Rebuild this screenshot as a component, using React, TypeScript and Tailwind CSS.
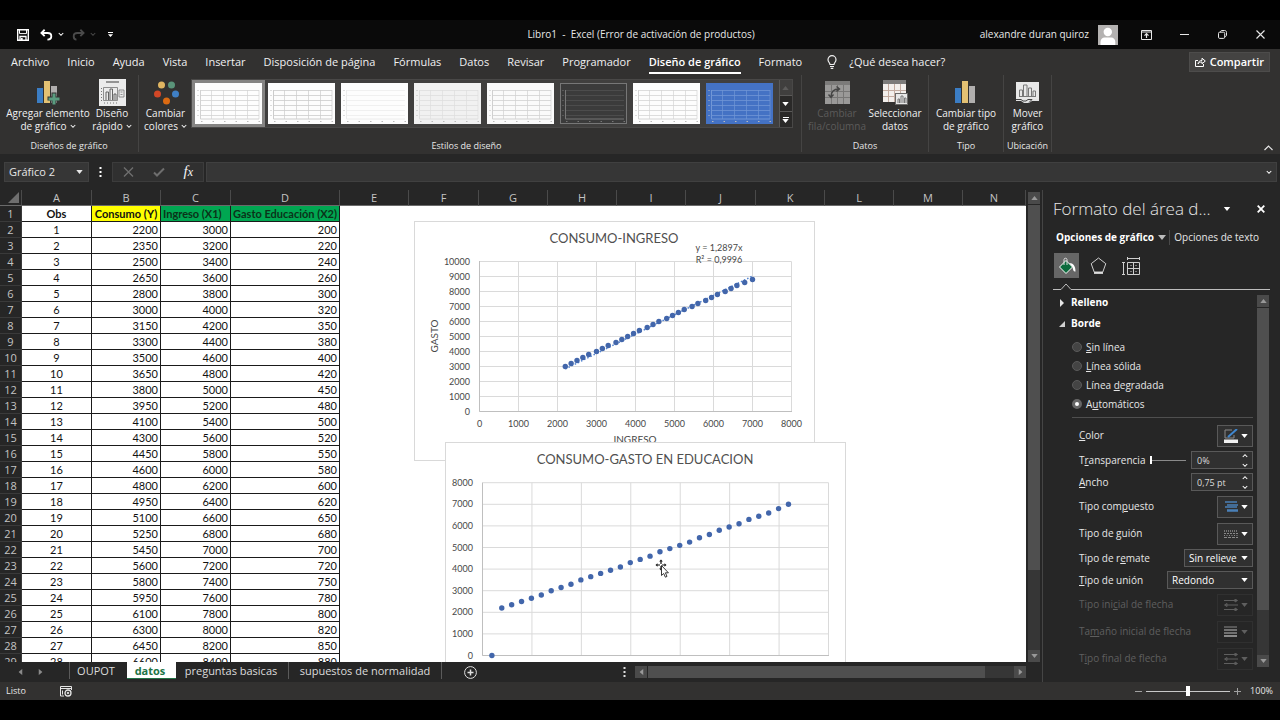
import React from "react";

const consumo = [
  2200, 2350, 2500, 2650, 2800, 3000, 3150, 3300, 3500, 3650, 3800, 3950, 4100, 4300, 4450, 4600, 4800, 4950, 5100,
  5250, 5450, 5600, 5800, 5950, 6100, 6300, 6450, 6600, 6800, 7000,
];
const gasto = [
  200, 220, 240, 260, 300, 320, 350, 380, 400, 420, 450, 480, 500, 520, 550, 580, 600, 620, 650, 680, 700, 720, 750,
  780, 800, 820, 850, 880,
];
const rows = gasto.map((g, i) => [i + 1, consumo[i], 3000 + 200 * i, g]);
const emptyColumns = ["E", "F", "G", "H", "I", "J", "K", "L", "M", "N"];

function Caret({ className = "" }: { className?: string }) {
  return (
    <svg viewBox="0 0 8 5" className={`h-[4px] w-[7px] shrink-0 ${className}`} fill="currentColor" aria-hidden="true">
      <path d="M0 0h8L4 5z" />
    </svg>
  );
}

function Chevron({ className = "" }: { className?: string }) {
  return (
    <svg viewBox="0 0 8 6" className={`h-[5px] w-[6px] shrink-0 ${className}`} fill="none" stroke="currentColor" strokeWidth="1.4" aria-hidden="true">
      <path d="M1 1l3 3 3-3" />
    </svg>
  );
}

/* ---------- Title bar ---------- */

function TitleBar() {
  return (
    <header className="relative flex h-[29px] shrink-0 items-center bg-[#0a0a0a]">
      <div className="flex flex-1 items-center pl-[17px]">
        <button aria-label="Guardar">
          <svg width="12" height="12" viewBox="0 0 12 12" fill="none" stroke="#fff">
            <path d="M.7.7h10.6v10.6H.7z" strokeWidth="1.4" />
            <path d="M2.5 1v3.6h7V1" strokeWidth="1" />
            <path d="M3 11.5V7.5h6v4" strokeWidth="1.3" />
            <path d="M4.8 9v2.5" strokeWidth="1.8" />
          </svg>
        </button>
        <button aria-label="Deshacer" className="ml-[11px] flex items-center gap-[5px] text-white">
          <svg width="13" height="12" viewBox="0 0 14 13" fill="none" stroke="currentColor" strokeWidth="2">
            <path d="M5 .8L1.5 4.3 5 7.8M2 4.3h6.2c2.600 0 4 1.400 4 3.500 0 2.200-1.500 3.700-4.200 3.700" />
          </svg>
          <Chevron />
        </button>
        <button aria-label="Rehacer" className="ml-[8px] flex items-center gap-[5px] text-[#4a4a4a]">
          <svg width="13" height="12" viewBox="0 0 14 13" fill="none" stroke="currentColor" strokeWidth="2">
            <path d="M9 .8l3.500 3.500L9 7.800M12 4.300H5.800c-2.600 0-4 1.400-4 3.500 0 2.200 1 3.700 3 3.700" />
          </svg>
          <Chevron />
        </button>
        <button aria-label="Personalizar barra" className="ml-[12px] text-white">
          <svg width="5" height="5" viewBox="0 0 5 5" fill="currentColor">
            <path d="M0 0h5v1H0zM0 2.300h5L2.500 5z" />
          </svg>
        </button>
      </div>
      <h1 className="whitespace-pre text-[10px] text-[#e8e8e8]">Libro1  -  Excel (Error de activación de productos)</h1>
      <div className="flex flex-1 items-center justify-end pr-[15px] text-[#e8e8e8]">
        <span className="mr-[9px] text-[10px]">alexandre duran quiroz</span>
        <svg width="20" height="20" viewBox="0 0 20 20" className="mr-[23px] bg-[#b4b2b1]">
          <circle cx="9.800" cy="7" r="4.200" fill="#fff" />
          <path d="M2.500 20v-3c0-3 2-4.500 4-4.500h6.800c2 0 4 1.500 4 4.500v3z" fill="#fff" />
        </svg>
        <button aria-label="Opciones de cinta" className="mr-[28px]">
          <svg width="11" height="10" viewBox="0 0 11 10" fill="none" stroke="currentColor">
            <path d="M.5.5h10v9H.5zM.5 2h10" />
            <path d="M5.500 8V4M3.500 5.700l2-2 2 2" strokeWidth="1.200" />
          </svg>
        </button>
        <button aria-label="Minimizar" className="mr-[29px]">
          <svg width="9" height="9" viewBox="0 0 9 9" stroke="currentColor">
            <path d="M0 4.500h9" />
          </svg>
        </button>
        <button aria-label="Restaurar" className="mr-[29px]">
          <svg width="9" height="9" viewBox="0 0 9 9" fill="none" stroke="currentColor">
            <rect x=".5" y="2.200" width="6.200" height="6.200" rx="1.200" />
            <path d="M2.500 2.200C2.500 1 3 .5 4 .5h2.500c1.300 0 2 .7 2 2v2.500c0 1-.5 1.500-1.700 1.500" />
          </svg>
        </button>
        <button aria-label="Cerrar">
          <svg width="9" height="9" viewBox="0 0 9 9" fill="none" stroke="currentColor" strokeWidth="1.100">
            <path d="M.5.5l8 8M8.500.5l-8 8" />
          </svg>
        </button>
      </div>
    </header>
  );
}

/* ---------- Ribbon ---------- */

const ribbonTabs = [
  "Archivo", "Inicio", "Ayuda", "Vista", "Insertar", "Disposición de página", "Fórmulas", "Datos", "Revisar",
  "Programador", "Diseño de gráfico", "Formato",
];

function RibbonTabs() {
  return (
    <nav className="flex h-[26px] shrink-0 items-center bg-[#323130] pl-[11px] pr-[10px] text-[11px] text-[#f0f0f0]">
      <div className="flex items-center gap-[18px]">
        {ribbonTabs.map((t) =>
          t === "Diseño de gráfico" ? (
            <button key={t} className="mt-[3px] border-b-2 border-white pb-px font-semibold leading-[18px] text-white">{t}</button>
          ) : (
            <button key={t} className="leading-[18px]">{t}</button>
          ),
        )}
      </div>
      <button className="ml-[25px] flex items-center gap-[12px]">
        <svg width="10" height="14" viewBox="0 0 10 14" fill="none" stroke="currentColor" strokeWidth="1.200">
          <path d="M3 9.500C3 7.800 1 7 1 4.700a4 4 0 018 0C9 7 7 7.800 7 9.500zM3 11.500h4M3.700 13.300h2.600" />
        </svg>
        ¿Qué desea hacer?
      </button>
      <button className="ml-auto flex h-[20px] items-center gap-[4px] border border-[#4d4c4b] bg-[#444342] px-[5px] font-semibold text-white">
        <svg width="11" height="10" viewBox="0 0 11 10" fill="none" stroke="currentColor">
          <path d="M3 3.500H.5v6h8V7" />
          <path d="M3 7c.3-2.400 1.700-3.500 4-3.500V1.200L10.300 4 7 6.800V5C5 5 4 5.500 3 7z" />
        </svg>
        Compartir
      </button>
    </nav>
  );
}

function Group({ label, className, children }: { label: string; className: string; children: React.ReactNode }) {
  return (
    <section className={`flex h-[77px] flex-col justify-between border-r border-[#454443] ${className}`}>
      <div className="flex items-start justify-center">{children}</div>
      <div className="text-center text-[9px] leading-[12px] text-[#e6e6e6]">{label}</div>
    </section>
  );
}

function BigButton({ icon, lines, drop, disabled, className = "" }: { icon: React.ReactNode; lines: [string, string]; drop?: boolean; disabled?: boolean; className?: string }) {
  return (
    <button disabled={disabled} className={`flex flex-col items-center whitespace-nowrap pt-[3px] text-[10px] leading-[13px] ${disabled ? "text-[#5c5b5a]" : "text-[#f0f0f0]"} ${className}`}>
      <span className="flex h-[29px] items-center">{icon}</span>
      <span>{lines[0]}</span>
      <span className="flex items-center gap-[3px]">
        {lines[1]}
        {drop && <Chevron />}
      </span>
    </button>
  );
}

function BarsIcon({ plus }: { plus?: boolean }) {
  return (
    <svg width="24" height="25" viewBox="0 0 24 25">
      <rect x="1" y="8" width="6" height="15" fill="#3b7dc4" />
      <rect x="8" y="1" width="6" height="22" fill="#e3c173" />
      <rect x="15" y="6" width="6" height="17" fill="#b1afae" />
      {plus && <path d="M15.500 12.500h5v4h4v4h-4v4h-5v-4h-4v-4h4z" fill="#323130" />}
      {plus && <path d="M16.500 13.500h3v4h4v3h-4v4h-3v-4h-4v-3h4z" fill="#5a9c80" />}
    </svg>
  );
}

function LayoutIcon() {
  return (
    <svg width="27" height="27" viewBox="0 0 27 27" fill="none" stroke="#777">
      <rect width="27" height="27" fill="#ebebeb" stroke="none" />
      <path d="M7 3h13" strokeWidth="1.500" />
      <path d="M4.500 8.500h14v13h-14zM20 11h5v7h-5zM21.500 13h2M21.500 15.500h2" strokeWidth=".8" />
      <path d="M7 21v-8h2.500v8M11 21V10h2.500v11M15 21v-6h2v6" stroke="#555" strokeWidth=".9" />
      <path d="M2.500 9v13M5 24h13" strokeDasharray="1 2" />
    </svg>
  );
}

function ColorsIcon() {
  return (
    <svg width="26" height="24" viewBox="0 0 26 24">
      <circle cx="8.500" cy="4" r="3.500" fill="#e0b561" />
      <circle cx="18.500" cy="4" r="3.500" fill="#5a9479" />
      <circle cx="4.500" cy="13" r="3.500" fill="#d24726" />
      <circle cx="22.500" cy="13" r="3.500" fill="#3f7fc4" />
      <circle cx="13.500" cy="20" r="3.500" fill="#db6a12" />
    </svg>
  );
}

function SwapIcon() {
  return (
    <svg width="25" height="23" viewBox="0 0 25 23" fill="none">
      <rect width="25" height="23" fill="#9a9998" />
      <rect width="25" height="4" fill="#7c7b7a" />
      <path d="M0 10.500h25M0 16.500h25M6.500 4v19M12.500 4v19M18.500 4v19" stroke="#777675" />
      <path d="M6 16c0-5 3-8 8-8M11.500 5.500L14.500 8l-3 2.500M3.500 13.500L6 16.500l2.500-3" stroke="#444" strokeWidth="1.400" />
    </svg>
  );
}

function SelectDataIcon() {
  return (
    <svg width="25" height="25" viewBox="0 0 25 25" fill="none">
      <rect width="23" height="22" fill="#f3efec" />
      <rect width="23" height="4" fill="#7c7b7a" />
      <path d="M0 10.500h23M0 16.500h23M5.500 4v18M11.500 4v18M17.500 4v18" stroke="#c3aca1" />
      <rect x="12.500" y="13.500" width="12" height="11" fill="#e8e8e8" stroke="#6b6a69" />
      <path d="M15 23v-4h1.500v4M18 23v-7h2v7M21.500 23v-5H23v5" stroke="#777" />
    </svg>
  );
}

function MoveChartIcon() {
  return (
    <svg width="23" height="21" viewBox="0 0 23 21" fill="none">
      <rect width="23" height="17" fill="#e8e8e8" />
      <path d="M3.500 14V8h3v6M7.500 14V3h3.500v11M12.500 14V6h3v8M17 14V9h2.500v5M3 14.500h17" stroke="#777" />
      <path d="M0 17h23v2h-7l-3 2H8l-3-2H0z" fill="#e2e2e2" />
      <path d="M0 17.500h5l2 1.500h3l2-1.500h4l-3 3" stroke="#444" />
    </svg>
  );
}

const styleThumbs = [
  { bg: "#fdfdfd", line: "#d2d2d2", v: true, sel: true },
  { bg: "#fdfdfd", line: "#cccccc", v: true },
  { bg: "#fdfdfd", line: "#ececec", v: false },
  { bg: "#f1f1f1", line: "#dedede", v: true },
  { bg: "#fafafa", line: "#d0d0d0", v: true },
  { bg: "#3b3b3b", line: "#505050", v: false, dark: true },
  { bg: "#fdfdfd", line: "#d4d4d4", v: true },
  { bg: "#4472c4", line: "#7096d6", v: true },
];

function StyleGallery() {
  return (
    <div className="flex h-[49px] border border-[#494847] bg-[#403f3e]">
      {styleThumbs.map((t, i) => (
        <button key={i} aria-label={`Estilo ${i + 1}`} className={`flex h-[47px] w-[73px] items-center justify-center border-[3px] ${t.sel ? "border-[#858483]" : "border-transparent"}`}>
          <svg width="67" height="41" viewBox="0 0 67 41" fill="none">
            <rect x=".5" y=".5" width="66" height="40" fill={t.bg} stroke={t.dark ? "#777" : t.bg} />
            <path d="M5 7.500h59M5 12.500h59M5 17.500h59M5 22.500h59M5 27.500h59M5 32.500h59" stroke={t.line} strokeWidth=".8" />
            {t.v && <path d="M16.500 7v29M28.500 7v29M40.500 7v29M52.500 7v29M64 7v29" stroke={t.line} strokeWidth=".7" />}
            <path d="M5.500 7v29H64" stroke={t.dark ? "#777" : t.line} />
            <path d="M3 7v29" stroke={t.dark ? "#777" : "#bbb"} strokeDasharray="1 4" />
            <path d="M6 38.500h60" stroke={t.dark ? "#777" : "#bbb"} strokeDasharray="1.500 10" />
          </svg>
        </button>
      ))}
      <div className="ml-[3px] flex w-[13px] flex-col divide-y divide-[#5a5958] border-l border-[#5a5958] text-white">
        <button aria-label="Arriba" className="flex flex-1 items-center justify-center text-[#5c5b5a]"><Caret className="h-[2px] w-[4px] rotate-180" /></button>
        <button aria-label="Abajo" className="flex flex-1 items-center justify-center bg-[#2a2928]"><Caret className="h-[2px] w-[4px]" /></button>
        <button aria-label="Más estilos" className="flex flex-1 flex-col items-center justify-center gap-px bg-[#2a2928]">
          <span className="h-px w-[6px] bg-white" />
          <Caret className="h-[3px] w-[5px]" />
        </button>
      </div>
    </div>
  );
}

function Ribbon() {
  return (
    <div className="flex h-[79px] shrink-0 items-start bg-[#323130]">
      <Group label="Diseños de gráfico" className="w-[139px]">
        <BigButton icon={<BarsIcon plus />} lines={["Agregar elemento", "de gráfico"]} drop className="w-[86px]" />
        <BigButton icon={<LayoutIcon />} lines={["Diseño", "rápido"]} drop className="w-[42px]" />
      </Group>
      <Group label="Estilos de diseño" className="w-[663px] pr-[7px]">
        <BigButton icon={<ColorsIcon />} lines={["Cambiar", "colores"]} drop className="w-[50px]" />
        <div className="pt-[4px]"><StyleGallery /></div>
      </Group>
      <Group label="Datos" className="w-[127px]">
        <BigButton icon={<SwapIcon />} lines={["Cambiar", "fila/columna"]} disabled className="w-[60px]" />
        <BigButton icon={<SelectDataIcon />} lines={["Seleccionar", "datos"]} className="w-[56px]" />
      </Group>
      <Group label="Tipo" className="w-[75px]">
        <BigButton icon={<BarsIcon />} lines={["Cambiar tipo", "de gráfico"]} />
      </Group>
      <Group label="Ubicación" className="w-[48px]">
        <BigButton icon={<MoveChartIcon />} lines={["Mover", "gráfico"]} />
      </Group>
      <button aria-label="Contraer la cinta" className="ml-auto mr-[7px] self-end pb-[3px] text-[#e6e6e6]">
        <svg width="9" height="6" viewBox="0 0 9 6" fill="none" stroke="currentColor" strokeWidth="1.200">
          <path d="M.5 5l4-4 4 4" />
        </svg>
      </button>
    </div>
  );
}

function FormulaBar() {
  return (
    <div className="flex h-[36px] shrink-0 items-center bg-[#262626] pl-[4px] pr-[3px]">
      <button className="flex h-[20px] w-[85px] items-center justify-between border border-[#404040] bg-[#363636] pl-[4px] pr-[5px] text-[11px] text-[#e6e6e6]">
        Gráfico 2
        <Caret className="h-[3px] w-[5px]" />
      </button>
      <svg width="3" height="10" viewBox="0 0 3 10" fill="#fff" className="mx-[10px]">
        <path d="M.5 0h2v2h-2zM.5 4h2v2h-2zM.5 8h2v2h-2z" />
      </svg>
      <div className="mr-[2px] flex h-[20px] w-[92px] items-center justify-between border border-[#3c3c3c] bg-[#303030] pl-[10px] pr-[10px] text-[#6e6e6e]">
        <button aria-label="Cancelar">
          <svg width="11" height="10" viewBox="0 0 11 10" stroke="currentColor" strokeWidth="1.400"><path d="M1 .5l9 9M10 .5l-9 9" /></svg>
        </button>
        <button aria-label="Introducir">
          <svg width="12" height="10" viewBox="0 0 12 10" fill="none" stroke="currentColor" strokeWidth="2"><path d="M1 5.500L4 8.500 11 1.500" /></svg>
        </button>
        <button aria-label="Insertar función" className="font-['Liberation_Serif',serif] text-[15px] italic leading-[15px] text-[#f5f5f5]">
          f<span className="text-[12px]">x</span>
        </button>
      </div>
      <div className="flex h-[20px] flex-1 items-center border border-[#404040] bg-[#363636] pr-[4px] text-white">
        <input aria-label="Barra de fórmulas" className="h-full min-w-0 flex-1 bg-transparent px-1 text-[11px] outline-none" />
        <Chevron />
      </div>
    </div>
  );
}

/* ---------- Sheet ---------- */

const colHead = "h-[16px] border-b border-r border-b-[#6a6a6a] border-r-[#4a4a4a] bg-[#262626] p-0 text-[11px] font-normal leading-[15px] text-[#c4c4c4]";
const rowHead = "h-[16px] border-b border-r border-[#3a3a3a] bg-[#262626] p-0 text-center text-[11px] font-normal leading-[15px] text-[#c4c4c4] font-['Open_Sans',sans-serif]";
const cell = "h-[16px] border-b border-r border-[#1a1a1a] p-0 leading-[15px]";
const head = "h-[16px] whitespace-nowrap border-b border-r border-[#1a1a1a] p-0 text-center font-bold leading-[15px]";

function SheetTable() {
  return (
    <table className="w-full table-fixed border-separate border-spacing-0 bg-white">
      <colgroup>
        <col className="w-[22px]" />
        <col className="w-[70px]" />
        <col className="w-[69px]" />
        <col className="w-[70px]" />
        <col className="w-[109px]" />
        {emptyColumns.map((c) => (
          <col key={c} className={c === "N" ? "w-auto" : c === "F" || c === "J" ? "w-[70px]" : "w-[69px]"} />
        ))}
      </colgroup>
      <thead>
        <tr>
          <th className={colHead}>
            <svg width="11" height="11" viewBox="0 0 11 11" className="ml-auto mr-[2px]" fill="#6e6e6e"><path d="M11 0v11H0z" /></svg>
          </th>
          {["A", "B", "C", "D", ...emptyColumns].map((c) => (
            <th key={c} scope="col" className={colHead}>{c}</th>
          ))}
        </tr>
      </thead>
      <tbody className="font-['Lato',sans-serif] text-[11px] text-[#111]">
        <tr>
          <th scope="row" className={rowHead}>1</th>
          <td className={head}>Obs</td>
          <td className={`${head} bg-[#ffff00]`}>Consumo (Y)</td>
          <td className={`${head} bg-[#00a651] pl-[2px] text-left text-[#0b3319]`}>Ingreso (X1)</td>
          <td className={`${head} bg-[#00a651] text-[#0b3319]`}>Gasto Educación (X2)</td>
          <td colSpan={emptyColumns.length} />
        </tr>
        {rows.map((r, i) => (
          <tr key={i}>
            <th scope="row" className={rowHead}>{i + 2}</th>
            <td className={`${cell} text-center`}>{r[0]}</td>
            <td className={`${cell} pr-[2px] text-right`}>{r[1]}</td>
            <td className={`${cell} pr-[2px] text-right`}>{r[2]}</td>
            <td className={`${cell} pr-[2px] text-right`}>{r[3]}</td>
            <td colSpan={emptyColumns.length} />
          </tr>
        ))}
      </tbody>
    </table>
  );
}

const range = (n: number) => Array.from({ length: n }, (_, i) => i);

function IncomeChart() {
  const px = (v: number) => 65.5 + (v / 1000) * 39;
  const py = (v: number) => 190.5 - (v / 1000) * 15;
  return (
    <svg width="401" height="241" viewBox="0 0 401 241" className="absolute left-[414px] top-[31px] font-['Lato',sans-serif]" role="img" aria-label="CONSUMO-INGRESO">
      <rect x=".5" y=".5" width="400" height="239" fill="#fff" stroke="#d9d9d9" />
      <text x="200" y="22" textAnchor="middle" fontSize="13" fill="#505050">CONSUMO-INGRESO</text>
      <g stroke="#dadada">
        {range(11).map((i) => <path key={i} d={`M65.500 ${py(i * 1000)}H377.500`} />)}
        {range(9).map((i) => <path key={i} d={`M${px(i * 1000)} 40.500V190.500`} />)}
      </g>
      <path d="M65.500 40V190.500H378" stroke="#bfbfbf" fill="none" />
      <g fontSize="9" fill="#484848">
        {range(11).map((i) => <text key={i} x="56" y={py(i * 1000) + 3} textAnchor="end">{i * 1000}</text>)}
        {range(9).map((i) => <text key={i} x={px(i * 1000)} y="206" textAnchor="middle">{i * 1000}</text>)}
        <text x="305" y="30" textAnchor="middle">y = 1,2897x</text>
        <text x="305" y="42" textAnchor="middle">R² = 0,9996</text>
      </g>
      <text x="221" y="222" textAnchor="middle" fontSize="10" fill="#484848">INGRESO</text>
      <text transform="translate(24 115) rotate(-90)" textAnchor="middle" fontSize="10" fill="#484848">GASTO</text>
      <path d={`M${px(2200)} ${py(2837)}L${px(7000)} ${py(9028)}`} stroke="#4f81cf" strokeWidth="1.500" strokeDasharray="1.500 2" />
      {consumo.map((c, i) => <circle key={c} cx={px(c)} cy={py(3000 + 200 * i)} r="2.700" fill="#4266ab" />)}
    </svg>
  );
}

function EducationChart() {
  const py = (v: number) => 213.5 - (v / 1000) * 21.6;
  const values = [0, ...consumo];
  return (
    <svg width="401" height="240" viewBox="0 0 401 240" className="absolute left-[445px] top-[252px] font-['Lato',sans-serif]" role="img" aria-label="CONSUMO-GASTO EN EDUCACION">
      <rect x=".5" y=".5" width="400" height="239" fill="#fff" stroke="#d9d9d9" />
      <text x="200" y="22" textAnchor="middle" fontSize="13" fill="#505050">CONSUMO-GASTO EN EDUCACION</text>
      <g stroke="#dadada">
        {range(9).map((i) => <path key={i} d={`M37.500 ${py(i * 1000)}H383.500`} />)}
        {range(8).map((i) => <path key={i} d={`M${37.5 + i * 49.43} 40.700V213.500`} />)}
      </g>
      <path d="M37.500 40.700V213.500H384" stroke="#bfbfbf" fill="none" />
      <g fontSize="9" fill="#484848">
        {range(9).map((i) => <text key={i} x="28" y={py(i * 1000) + 3} textAnchor="end">{i * 1000}</text>)}
      </g>
      {values.map((c, i) => <circle key={c} cx={37.5 + (i + 1) * 9.886 - 0.5} cy={py(c)} r="2.700" fill="#4266ab" />)}
      <g transform="translate(216 123)">
        <path d="M0-5.500l1.800 2H.6V-1H-.6v-2.500h-1.200zM-5.500 0l2-1.800V-.6H-1V.6h-2.500v1.200zM5.500 0l-2-1.800V-.6H1V.6h2.500v1.200zM0 5.500l-1.800-2h1.200V1H.6v2.500h1.200z" fill="#111" />
        <path d="M.5.500v10l2.200-2 1.700 3.700 1.600-.8-1.600-3.600h3z" fill="#fff" stroke="#222" strokeWidth=".9" />
      </g>
    </svg>
  );
}

const scrollBtn = "flex h-[12px] w-[12px] shrink-0 items-center justify-center bg-[#4a4a4a] text-[#999]";

function Sheet() {
  return (
    <div className="flex min-h-0 flex-1">
      <div className="relative min-w-0 flex-1 overflow-hidden bg-white">
        <SheetTable />
        <IncomeChart />
        <EducationChart />
      </div>
      <div className="ml-[2px] flex w-[14px] shrink-0 flex-col pt-[2px]">
        <button aria-label="Desplazar arriba" className={scrollBtn}><Caret className="h-[4px] rotate-180" /></button>
        <div className="mt-px flex min-h-0 w-[12px] flex-1 flex-col bg-[#363636]">
          <div className="h-[82%] bg-[#4f4f4f]" />
        </div>
        <button aria-label="Desplazar abajo" className={scrollBtn}><Caret /></button>
      </div>
    </div>
  );
}

function SheetTabs() {
  const tab = "text-[11px] leading-[16px] text-[#dcdcdc]";
  return (
    <div className="flex h-[20px] shrink-0 items-start bg-[#262626]">
      <div className="flex h-full w-[69px] items-center gap-[13px] pl-[17px] text-[#8a8a8a]">
        <button aria-label="Hoja anterior"><Caret className="h-[4px] w-[6px] rotate-90" /></button>
        <button aria-label="Hoja siguiente"><Caret className="h-[4px] w-[6px] -rotate-90" /></button>
      </div>
      <div className="flex h-[17px]">
        <button className={`${tab} w-[58px] border-l border-[#5a5a5a] pr-[5px]`}>OUPOT</button>
        <button className="h-[17px] w-[49px] border-b border-[#217346] bg-white pr-[3px] text-[11px] font-bold leading-[15px] text-[#217346]">datos</button>
        <button className={`${tab} w-[113px] border-r border-[#5a5a5a] pr-[2px]`}>preguntas basicas</button>
        <button className={`${tab} w-[153px] border-r border-[#5a5a5a]`}>supuestos de normalidad</button>
      </div>
      <button aria-label="Hoja nueva" className="ml-[22px] mt-[4px] text-[#e0e0e0]">
        <svg width="13" height="13" viewBox="0 0 13 13" fill="none" stroke="currentColor">
          <circle cx="6.500" cy="6.500" r="5.900" />
          <path d="M6.500 3.500v6M3.500 6.500h6" strokeWidth="1.500" />
        </svg>
      </button>
      <div className="ml-auto flex h-full w-[419px] items-center">
        <svg width="3" height="10" viewBox="0 0 3 10" fill="#e0e0e0">
          <path d="M.5 0h2v2h-2zM.5 4h2v2h-2zM.5 8h2v2h-2z" />
        </svg>
        <button aria-label="Desplazar a la izquierda" className={`${scrollBtn} ml-[9px]`}><Caret className="rotate-90" /></button>
        <div className="ml-px flex h-[12px] flex-1 bg-[#363636]"><div className="w-[92%] bg-[#4f4f4f]" /></div>
        <button aria-label="Desplazar a la derecha" className={`${scrollBtn} mr-[16px]`}><Caret className="-rotate-90" /></button>
      </div>
    </div>
  );
}

/* ---------- Format panel ---------- */

function Row({ id, label, muted, tall, children }: { id: string; label: React.ReactNode; muted?: boolean; tall?: boolean; children: React.ReactNode }) {
  return (
    <div className={`flex items-center justify-between ${tall ? "h-[23px]" : "h-[18px]"} ${muted ? "text-[#5f5f5f]" : "text-[#e6e6e6]"}`}>
      <label htmlFor={id} className="whitespace-nowrap">{label}</label>
      {children}
    </div>
  );
}

function PickButton({ id, muted, children }: { id: string; muted?: boolean; children: React.ReactNode }) {
  return (
    <button id={id} disabled={muted} className={`flex h-[22px] w-[36px] items-center justify-between border pl-[6px] pr-[4px] ${muted ? "border-[#303030] text-[#5f5f5f]" : "border-[#595959] bg-[#303030] text-white"}`}>
      {children}
      <Caret className="w-[6px]" />
    </button>
  );
}

function Spin({ id, value }: { id: string; value: string }) {
  return (
    <div className="flex h-[18px] w-[62px] shrink-0 items-center border border-[#595959] bg-[#303030] pr-[4px]">
      <input id={id} defaultValue={value} className="h-full min-w-0 flex-1 bg-transparent pl-[5px] text-[9px] text-[#dcdcdc] outline-none" />
      <div className="flex flex-col gap-[5px] text-white">
        <button aria-label="Aumentar" className="flex"><Chevron className="h-[3px] w-[5px] rotate-180" /></button>
        <button aria-label="Disminuir" className="flex"><Chevron className="h-[3px] w-[5px]" /></button>
      </div>
    </div>
  );
}

function Pick({ id, value, className }: { id: string; value: string; className: string }) {
  return (
    <div className={`grid h-[18px] items-center border border-[#595959] bg-[#303030] ${className}`}>
      <select id={id} className="col-start-1 row-start-1 h-full w-full appearance-none bg-transparent pl-[4px] text-[10px] leading-[16px] text-white outline-none">
        <option>{value}</option>
      </select>
      <Caret className="pointer-events-none col-start-1 row-start-1 mr-[4px] w-[6px] justify-self-end text-white" />
    </div>
  );
}

function ArrowsIcon() {
  return (
    <svg width="14" height="12" viewBox="0 0 14 12" fill="none" stroke="currentColor">
      <path d="M0 1.500h13M1 6h13M0 10.500h13M11 0v3l2.500-1.500zM3 4.500v3L.5 6zM11 9v3l2.500-1.500z" />
    </svg>
  );
}

function FormatPanel() {
  const options: [React.ReactNode, boolean][] = [
    [<><u>S</u>in línea</>, false],
    [<><u>L</u>ínea sólida</>, false],
    [<>Línea <u>d</u>egradada</>, false],
    [<>A<u>u</u>tomáticos</>, true],
  ];
  return (
    <aside className="flex w-[238px] shrink-0 flex-col border-l border-[#454545] bg-[#262626] pl-[10px] pr-[10px] text-[10px]">
      <div className="flex h-[38px] items-center text-white">
        <h2 className="w-[164px] whitespace-nowrap text-[17px] font-light text-[#e6e6e6]">Formato del área d...</h2>
        <button aria-label="Opciones del panel" className="ml-[6px]"><Caret className="w-[8px]" /></button>
        <button aria-label="Cerrar panel" className="ml-auto mr-[5px]">
          <svg width="8" height="8" viewBox="0 0 8 8" stroke="currentColor" strokeWidth="1.800"><path d="M.7.7l6.600 6.600M7.300.7L.7 7.300" /></svg>
        </button>
      </div>
      <div className="flex h-[19px] items-center justify-between whitespace-nowrap pl-[3px] pr-[11px] text-[#e6e6e6]">
        <button className="flex items-center gap-[4px] font-bold text-white">Opciones de gráfico<Caret className="h-[5px] w-[8px] text-[#bdbdbd]" /></button>
        <button className="border-l border-[#4a4a4a] pl-[4px]">Opciones de texto</button>
      </div>
      <div className="mt-[6px] flex items-center pl-px text-[#cfcfcf]">
        <button aria-label="Relleno y línea" className="flex h-[25px] w-[25px] items-center justify-center bg-[#666]">
          <svg width="18" height="18" viewBox="0 0 18 18" fill="none">
            <path d="M8 3.500l6.500 6.500L8 16.500 1.500 10z" fill="#0c6b3d" stroke="#fff" />
            <path d="M6 8V2.500C6 .8 9 .8 9 2.500V8" stroke="#ddd" />
            <path d="M11 6c4.500 0 6.500 3 6.500 8.500-2 .5-2.500-1.500-3-4.500z" fill="#fff" />
          </svg>
        </button>
        <button aria-label="Efectos" className="ml-[11px]">
          <svg width="17" height="17" viewBox="0 0 17 17" fill="none" stroke="currentColor">
            <path d="M8.500 1l7.300 5.700-3 8.300H4.200L1.200 6.700z" />
            <path d="M4 16h9" stroke="#fff" strokeWidth="1.500" />
          </svg>
        </button>
        <button aria-label="Tamaño y propiedades" className="ml-[15px]">
          <svg width="18" height="18" viewBox="0 0 18 18" fill="none" stroke="currentColor">
            <path d="M5.500 5.500h12v12h-12zM11.500 5.500v12M5.500 11.500h12M8.500 11.500h6M11.500 8v7" />
            <path d="M5.500 1.500h12M5.500 0v3M17.500 0v3M1.500 5.500v12M0 5.500h3M0 17.500h3M8.500 8.500h1M13.500 8.500h1M8.500 14.500h1M13.500 14.500h1" />
          </svg>
        </button>
      </div>
      <div className="mt-[3px] flex h-[9px] items-end text-[#bdbdbd]">
        <span className="h-px w-[8px] bg-current" />
        <svg width="10" height="7" viewBox="0 0 10 7" fill="none" stroke="currentColor"><path d="M0 6.500L5 1l5 5.500" /></svg>
        <span className="h-px flex-1 bg-current" />
      </div>
      <div className="mt-[4px] flex items-start pr-px">
        <div className="min-w-0 flex-1 pr-[4px]">
          <button className="flex h-[17px] items-center gap-[6px] pl-[6px] font-bold text-white">
            <svg width="6" height="8" viewBox="0 0 6 8" fill="#e6e6e6"><path d="M1 0l4 4-4 4z" /></svg>
            Relleno
          </button>
          <button className="mt-[4px] flex h-[17px] items-center gap-[6px] pl-[6px] font-bold text-white">
            <svg width="6" height="6" viewBox="0 0 6 6" fill="#d0d0d0"><path d="M6 0v6H0z" /></svg>
            Borde
          </button>
          <fieldset className="mt-[5px] flex flex-col pl-[19px] text-[#e6e6e6]">
            {options.map(([label, checked], i) => (
              <label key={i} className="flex h-[19px] items-center gap-[4px] leading-[14px]">
                <input type="radio" name="borde" defaultChecked={checked} className="h-[10px] w-[10px] appearance-none rounded-full border border-[#5a5a5a] bg-[#444] checked:border-[3px] checked:border-[#666] checked:bg-white" />
                <span>{label}</span>
              </label>
            ))}
          </fieldset>
          <hr className="ml-[19px] mt-[4px] border-[#4f4f4f]" />
          <div className="mt-[6px] flex flex-col gap-[4px] pl-[26px]">
            <Row id="color" tall label={<><u>C</u>olor</>}>
              <PickButton id="color">
                <svg width="14" height="14" viewBox="0 0 14 14" fill="none">
                  <path d="M8 1H1v8h9V6" stroke="#8a8a8a" />
                  <path d="M4 8l9-8" stroke="#3f86cf" strokeWidth="2" />
                  <rect y="10.500" width="14" height="3.500" fill="#f0f0f0" />
                </svg>
              </PickButton>
            </Row>
            <Row id="transparencia" label={<>T<u>r</u>ansparencia</>}>
              <input type="range" aria-label="Control de transparencia" defaultValue={0} className="ml-[4px] mr-[5px] h-[8px] w-[36px] min-w-0 appearance-none bg-[linear-gradient(#8a8a8a,#8a8a8a)] bg-[length:100%_1px] bg-center bg-no-repeat [&::-webkit-slider-thumb]:h-[8px] [&::-webkit-slider-thumb]:w-[2px] [&::-webkit-slider-thumb]:appearance-none [&::-webkit-slider-thumb]:bg-white" />
              <Spin id="transparencia" value="0%" />
            </Row>
            <Row id="ancho" label={<><u>A</u>ncho</>}><Spin id="ancho" value="0,75 pt" /></Row>
            <Row id="compuesto" tall label={<>Tipo com<u>p</u>uesto</>}>
              <PickButton id="compuesto">
                <svg width="14" height="11" viewBox="0 0 14 11" fill="none" stroke="#4a80b8"><path d="M1 1h12" strokeWidth="1.500" /><path d="M3 4h11M1 6h12" strokeWidth="1.500" /><path d="M3 9.500h11" strokeWidth="2.500" /></svg>
              </PickButton>
            </Row>
            <Row id="guion" tall label={<>Tipo de <u>g</u>uión</>}>
              <PickButton id="guion">
                <svg width="14" height="8" viewBox="0 0 14 8" fill="none" stroke="#8a8a8a"><path d="M0 1h14" strokeWidth="1.500" strokeDasharray="1 1" /><path d="M0 3.500h14" strokeDasharray="2 1" /><path d="M0 5.500h14" strokeDasharray="1 1.500" /><path d="M0 7.500h14" strokeDasharray="3 1" /></svg>
              </PickButton>
            </Row>
            <Row id="remate" label={<>Tipo de r<u>e</u>mate</>}><Pick id="remate" value="Sin relieve" className="w-[69px]" /></Row>
            <Row id="union" label={<><u>T</u>ipo de unión</>}><Pick id="union" value="Redondo" className="w-[86px]" /></Row>
            <Row id="inicial" tall muted label={<>Tipo ini<u>c</u>ial de flecha</>}><PickButton id="inicial" muted><ArrowsIcon /></PickButton></Row>
            <Row id="tamano" tall muted label={<>Ta<u>m</u>año inicial de flecha</>}>
              <PickButton id="tamano" muted>
                <svg width="13" height="11" viewBox="0 0 13 11" stroke="#8a8a8a"><path d="M0 1h13" /><path d="M0 4h13M0 7h13" strokeWidth="1.500" /><path d="M0 10h13" strokeWidth="2" /></svg>
              </PickButton>
            </Row>
            <Row id="final" tall muted label={<>T<u>i</u>po final de flecha</>}><PickButton id="final" muted><ArrowsIcon /></PickButton></Row>
          </div>
        </div>
        <div className="mt-px flex w-[12px] shrink-0 flex-col self-stretch pb-[3px]">
          <button aria-label="Subir" className={scrollBtn}><Caret className="rotate-180" /></button>
          <div className="mt-px flex-1 bg-[#363636]"><div className="h-[87%] bg-[#4f4f4f]" /></div>
          <button aria-label="Bajar" className={scrollBtn}><Caret /></button>
        </div>
      </div>
    </aside>
  );
}

function StatusBar() {
  return (
    <footer className="flex h-[18px] shrink-0 items-center bg-[#323130] pl-[6px] pr-[7px] text-[9px] text-[#e6e6e6]">
      <span className="w-[54px]">Listo</span>
      <svg width="12" height="11" viewBox="0 0 12 11" fill="none" stroke="currentColor">
        <path d="M4 10H.5V.5h11V4M.5 2.500h11M2.500 4.500v4" />
        <circle cx="8" cy="7" r="3" strokeWidth="1.300" />
        <circle cx="8" cy="7" r=".8" fill="currentColor" />
      </svg>
      <div className="ml-auto flex items-center">
        <button aria-label="Alejar" className="h-px w-[7px] bg-[#a0a0a0]" />
        <input type="range" aria-label="Zoom" defaultValue={50} className="mx-[4px] h-[10px] w-[84px] appearance-none bg-[linear-gradient(#c8c8c8,#c8c8c8)] bg-[length:100%_1px] bg-center bg-no-repeat [&::-webkit-slider-thumb]:h-[10px] [&::-webkit-slider-thumb]:w-[4px] [&::-webkit-slider-thumb]:appearance-none [&::-webkit-slider-thumb]:bg-white" />
        <button aria-label="Acercar">
          <svg width="7" height="7" viewBox="0 0 7 7" stroke="#a0a0a0"><path d="M0 3.500h7M3.500 0v7" /></svg>
        </button>
        <span className="ml-[9px]">100%</span>
      </div>
    </footer>
  );
}

export default function App() {
  return (
    <div className="flex h-screen flex-col overflow-hidden bg-black py-[20px] font-['Open_Sans','Noto_Sans',sans-serif]">
      <TitleBar />
      <RibbonTabs />
      <Ribbon />
      <FormulaBar />
      <div className="flex min-h-0 flex-1 bg-[#262626]">
        <main className="flex min-w-0 flex-1 flex-col">
          <Sheet />
          <SheetTabs />
        </main>
        <FormatPanel />
      </div>
      <StatusBar />
    </div>
  );
}
